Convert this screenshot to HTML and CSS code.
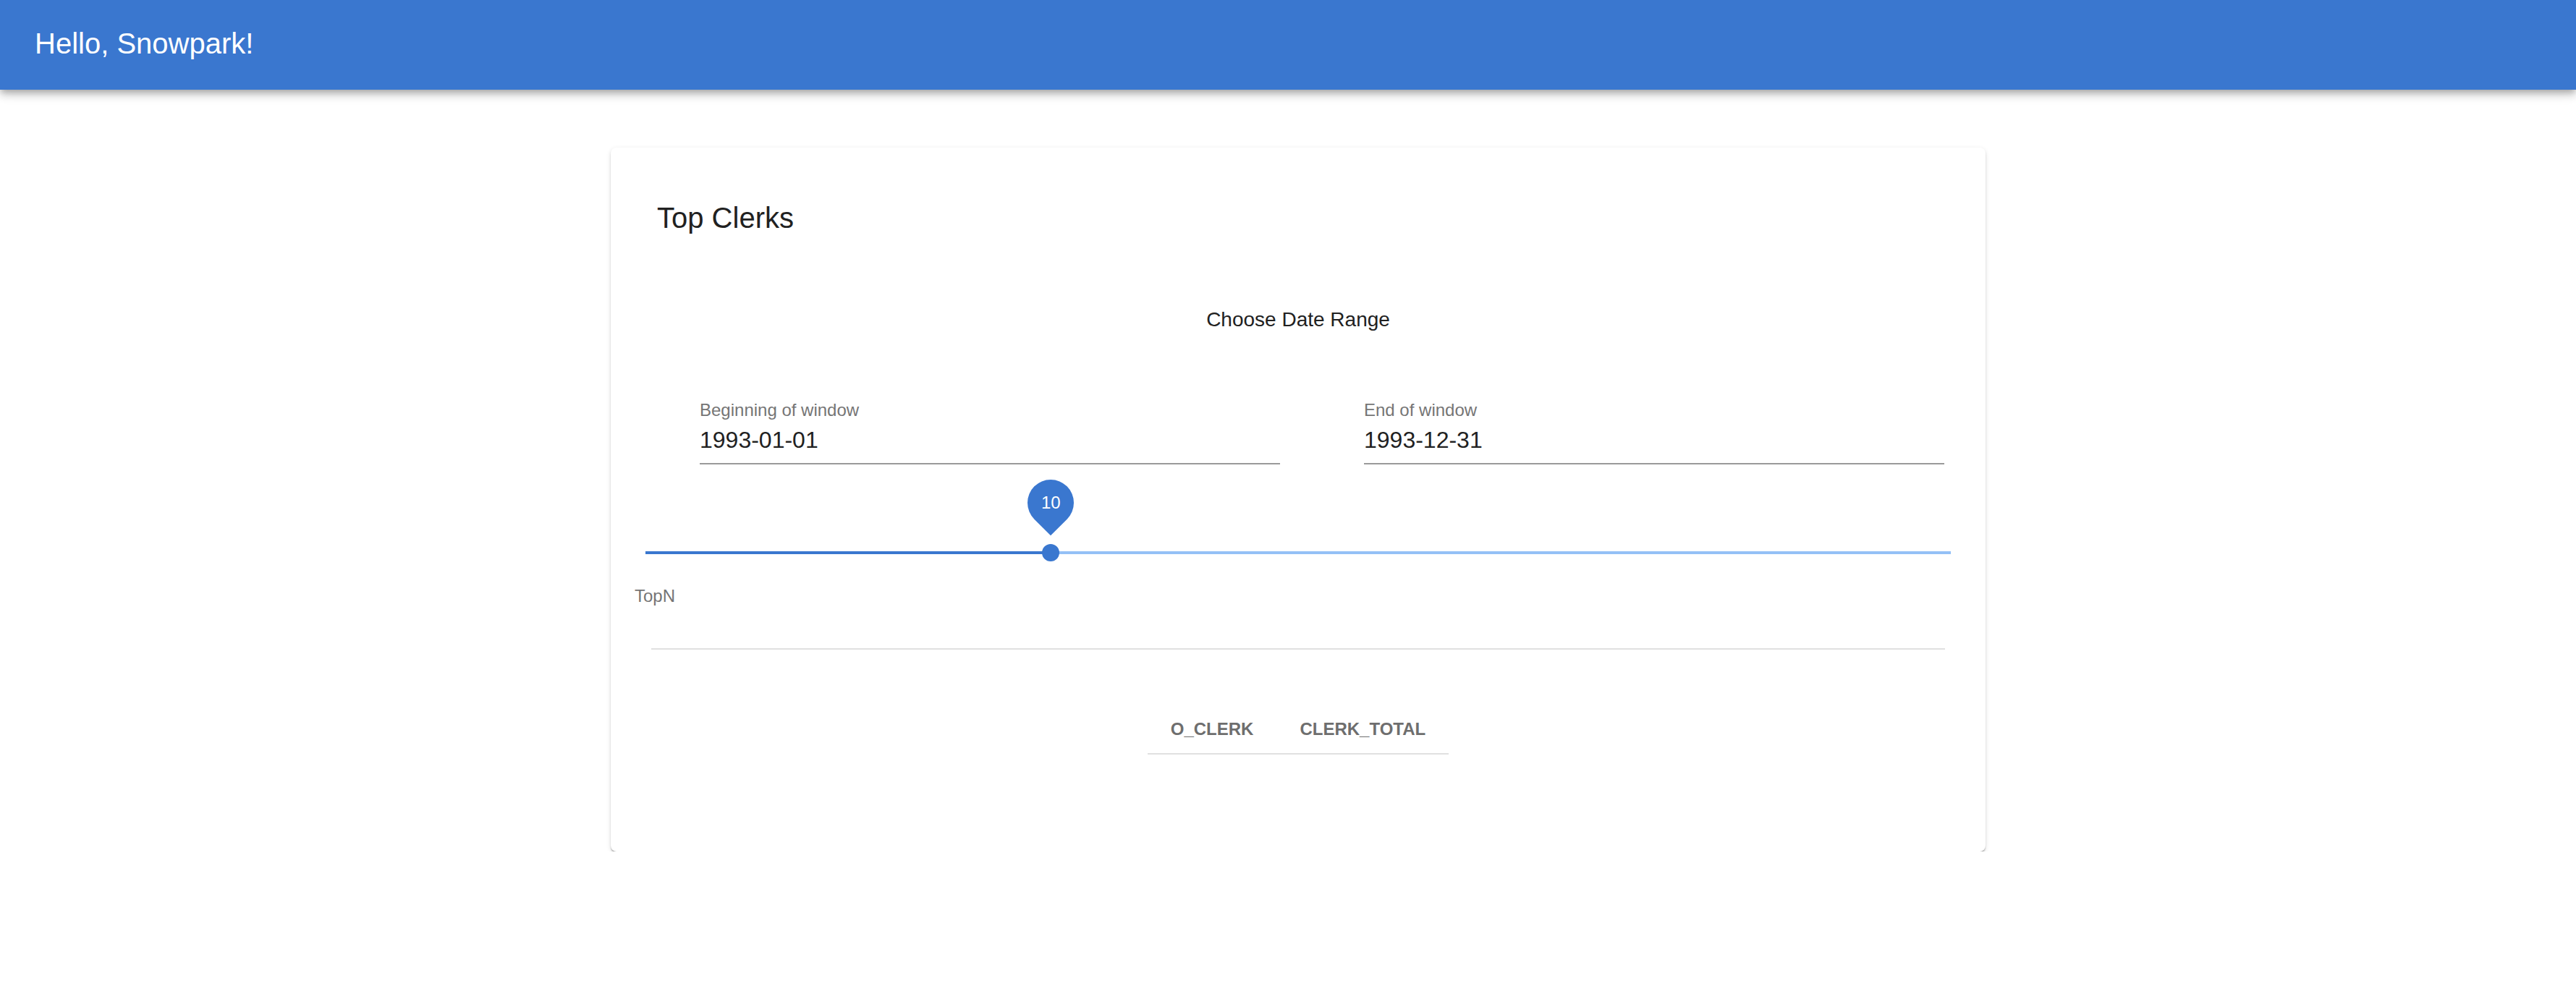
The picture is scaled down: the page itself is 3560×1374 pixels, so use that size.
FILE: index.html
```html
<!DOCTYPE html>
<html lang="en">
<head>
<meta charset="utf-8">
<title>Hello, Snowpark!</title>
<link rel="stylesheet" href="styles.css">
</head>
<body>
<header class="appbar">
  <h1 class="appbar-title">Hello, Snowpark!</h1>
</header>
<main class="page">
  <section class="card">
    <h2 class="card-title">Top Clerks</h2>
    <p class="subtitle">Choose Date Range</p>
    <div class="fields">
      <div class="field">
        <label class="field-label">Beginning of window</label>
        <div class="field-value">1993-01-01</div>
      </div>
      <div class="field">
        <label class="field-label">End of window</label>
        <div class="field-value">1993-12-31</div>
      </div>
    </div>
    <div class="slider">
      <span class="rail"></span>
      <span class="track" style="width: 31.03%"></span>
      <span class="thumb" style="left: 31.03%">
        <span class="value-label"><span class="value-text">10</span></span>
      </span>
    </div>
    <div class="slider-caption">TopN</div>
    <div class="divider"></div>
    <table class="results">
      <thead>
        <tr><th>O_CLERK</th><th>CLERK_TOTAL</th></tr>
      </thead>
    </table>
  </section>
</main>
</body>
</html>
```
FILE: styles.css
```css
html, body {
  margin: 0;
  padding: 0;
  background: #ffffff;
  font-family: "Liberation Sans", Arial, Helvetica, sans-serif;
  color: #212121;
}

.appbar {
  height: 124px;
  background: #3a77cf;
  display: flex;
  align-items: center;
  padding: 0 0 4px 48px;
  box-sizing: border-box;
  box-shadow: 0 4px 8px -2px rgba(0,0,0,0.2), 0 8px 10px 0 rgba(0,0,0,0.14), 0 2px 20px 0 rgba(0,0,0,0.12);
  position: relative;
  z-index: 1;
}

.appbar-title {
  margin: 0;
  font-size: 40px;
  font-weight: 400;
  line-height: 48px;
  color: #ffffff;
}

.page {
  display: flex;
  justify-content: center;
  padding: 80px 0 0 28px;
}

.card {
  width: 1900px;
  background: #ffffff;
  border-radius: 8px;
  box-shadow: 0 4px 3px -2px rgba(0,0,0,0.28), 0 2px 2px 0 rgba(0,0,0,0.14), 0 2px 6px 0 rgba(0,0,0,0.12);
  padding: 0 0 134px 0;
  display: flex;
  flex-direction: column;
}

.card-title {
  margin: 65px 0 0 64px;
  font-size: 40px;
  font-weight: 400;
  line-height: 64px;
  color: #212121;
}

.subtitle {
  margin: 89px 0 0;
  font-size: 28px;
  line-height: 40px;
  text-align: center;
  color: #212121;
}

.fields {
  margin: 87px 0 0 123px;
  display: grid;
  grid-template-columns: 802px 802px;
  column-gap: 116px;
}

.field {
  display: flex;
  flex-direction: column;
}

.field-label {
  font-size: 24px;
  line-height: 36px;
  color: #757575;
}

.field-value {
  font-size: 32px;
  line-height: 46px;
  color: #212121;
  padding-bottom: 9px;
  border-bottom: 2px solid #9a9a9a;
}

.slider {
  position: relative;
  height: 24px;
  margin: 110px 48px 0;
}

.rail {
  position: absolute;
  left: 0;
  right: 0;
  top: 10px;
  height: 4px;
  background: #94c0f6;
}

.track {
  position: absolute;
  left: 0;
  top: 10px;
  height: 4px;
  background: #3a77cf;
}

.thumb {
  position: absolute;
  top: 0;
  width: 24px;
  height: 24px;
  margin-left: -12px;
  border-radius: 50%;
  background: #3a77cf;
}

.value-label {
  position: absolute;
  left: -20px;
  top: -89px;
  width: 64px;
  height: 64px;
  border-radius: 50% 50% 50% 0;
  background: #3a77cf;
  transform: rotate(-45deg);
  display: flex;
  align-items: center;
  justify-content: center;
}

.value-text {
  transform: rotate(45deg);
  font-size: 24px;
  line-height: 24px;
  color: #ffffff;
}

.slider-caption {
  margin: 32px 0 0 33px;
  font-size: 24px;
  line-height: 32px;
  color: #757575;
}

.divider {
  margin: 56px 56px 0;
  border-top: 2px solid #e0e0e0;
}

.results {
  margin: 70px auto 0;
  border-collapse: collapse;
}

.results th {
  padding: 16px 32px 9px;
  font-size: 24px;
  line-height: 48px;
  font-weight: 700;
  color: #6e6e6e;
  text-align: left;
  border-bottom: 2px solid #e0e0e0;
}
```
